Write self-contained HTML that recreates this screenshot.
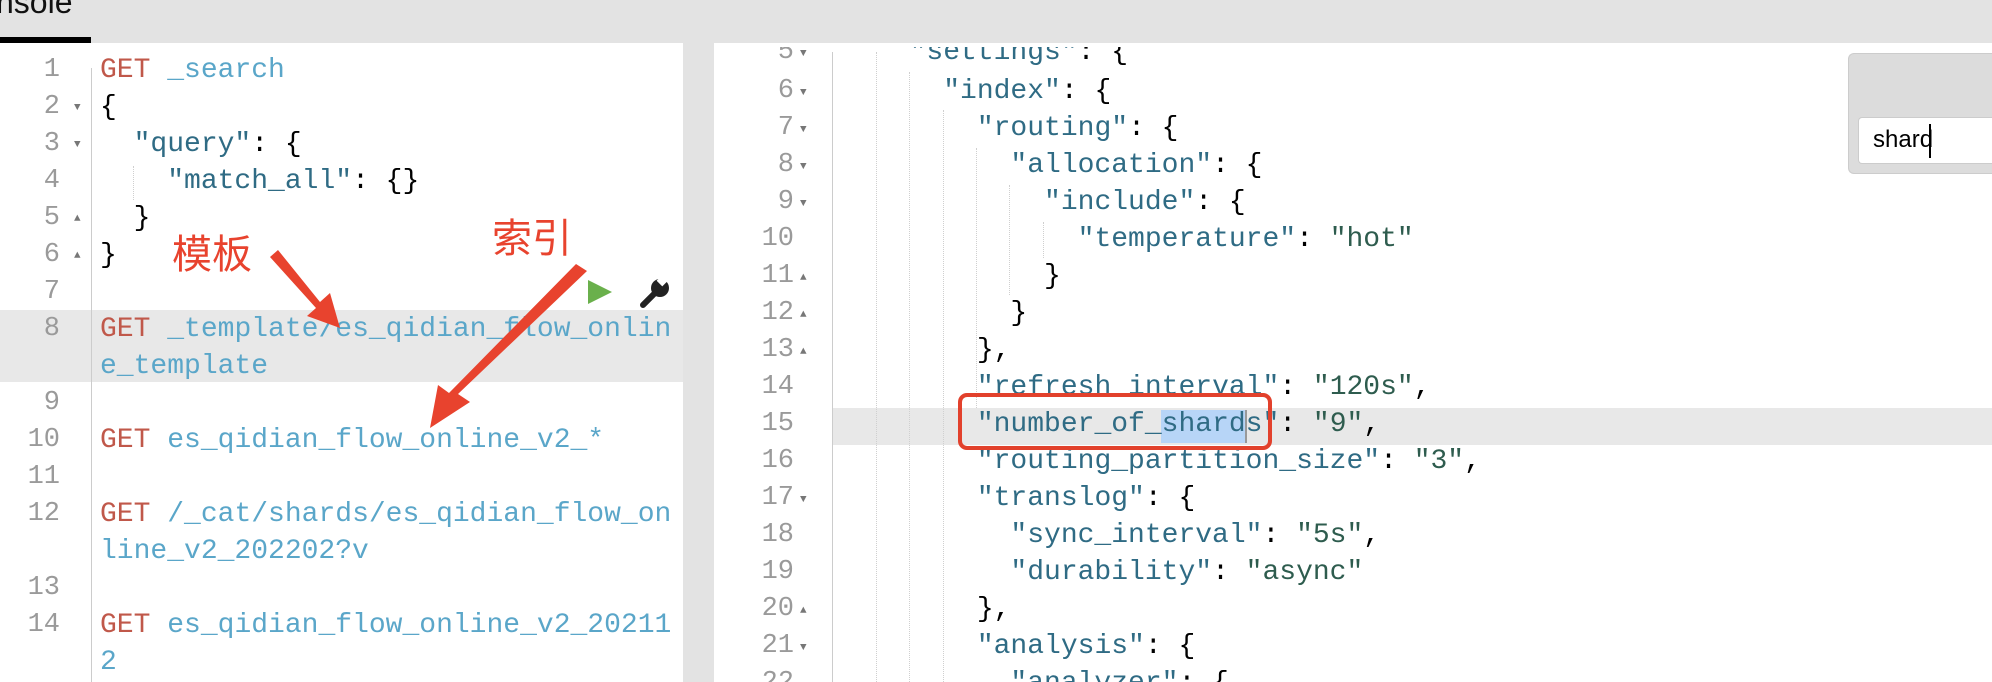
<!DOCTYPE html>
<html><head><meta charset="utf-8"><style>
html,body{margin:0;padding:0;width:1992px;height:682px;overflow:hidden}
body{background:#e3e3e3;position:relative;font-family:"Liberation Mono","DejaVu Sans Mono",monospace}
.p{position:absolute;background:#fff}
.l{position:absolute;height:37px;line-height:37px;font-size:28px;letter-spacing:0px;white-space:pre;color:#000}
.n{position:absolute;height:37px;line-height:37px;font-size:27px;color:#9a9a9a;text-align:right;width:60px}
.f{position:absolute;font-size:11px;color:#777}
.g{color:#c0584a}.u{color:#5aa6c9}.k{color:#2f6b84}.s{color:#2e5c4e}
.hl{position:absolute;background:#e8e8e8}
.guide{position:absolute;border-left:1px dotted #cfcfcf}
</style></head><body>
<div style="position:absolute;left:-4px;top:-16px;font-family:'Liberation Sans',sans-serif;font-size:32px;color:#111">nsole</div>
<div style="position:absolute;left:0;top:37px;width:91px;height:6px;background:#000"></div>

<div class="p" style="left:0;top:43px;width:683px;height:639px"></div>
<div class="hl" style="left:0;top:310px;width:683px;height:72px"></div>
<div style="position:absolute;left:91px;top:68px;width:1px;height:614px;background:#ccc"></div>
<div class="guide" style="left:133px;top:166px;height:34px"></div>

<div class="n" style="left:0;top:52px">1</div><div class="l" style="left:100px;top:52px"><span class="g">GET</span> <span class="u">_search</span></div>
<div class="n" style="left:0;top:89px">2</div><div class="f" style="left:74px;top:102px">▼</div><div class="l" style="left:100px;top:89px">{</div>
<div class="n" style="left:0;top:126px">3</div><div class="f" style="left:74px;top:139px">▼</div><div class="l" style="left:100px;top:126px">  <span class="k">"query"</span>: {</div>
<div class="n" style="left:0;top:163px">4</div><div class="l" style="left:100px;top:163px">    <span class="k">"match_all"</span>: {}</div>
<div class="n" style="left:0;top:200px">5</div><div class="f" style="left:74px;top:213px">▲</div><div class="l" style="left:100px;top:200px">  }</div>
<div class="n" style="left:0;top:237px">6</div><div class="f" style="left:74px;top:250px">▲</div><div class="l" style="left:100px;top:237px">}</div>
<div class="n" style="left:0;top:274px">7</div>
<div class="n" style="left:0;top:311px">8</div><div class="l" style="left:100px;top:311px"><span class="g">GET</span> <span class="u">_template/es_qidian_flow_onlin</span></div>
<div class="l" style="left:100px;top:348px"><span class="u">e_template</span></div>
<div class="n" style="left:0;top:385px">9</div>
<div class="n" style="left:0;top:422px">10</div><div class="l" style="left:100px;top:422px"><span class="g">GET</span> <span class="u">es_qidian_flow_online_v2_*</span></div>
<div class="n" style="left:0;top:459px">11</div>
<div class="n" style="left:0;top:496px">12</div><div class="l" style="left:100px;top:496px"><span class="g">GET</span> <span class="u">/_cat/shards/es_qidian_flow_on</span></div>
<div class="l" style="left:100px;top:533px"><span class="u">line_v2_202202?v</span></div>
<div class="n" style="left:0;top:570px">13</div>
<div class="n" style="left:0;top:607px">14</div><div class="l" style="left:100px;top:607px"><span class="g">GET</span> <span class="u">es_qidian_flow_online_v2_20211</span></div>
<div class="l" style="left:100px;top:644px"><span class="u">2</span></div>

<svg style="position:absolute;left:585px;top:276px" width="90" height="34" viewBox="0 0 90 34">
<polygon points="3,4 27,16 3,28" fill="#6ab04c"/>
<path d="M58 29 L71 16" stroke="#222" stroke-width="6" stroke-linecap="round"/>
<circle cx="75" cy="12" r="9" fill="#222"/>
<rect x="74" y="0" width="8" height="9" fill="#fff" transform="rotate(45 78 4)"/>
</svg>

<div class="p" style="left:714px;top:43px;width:1278px;height:639px"></div>
<div class="hl" style="left:833px;top:408px;width:1159px;height:37px"></div>
<div style="position:absolute;left:1161px;top:410px;width:84px;height:33px;background:#b7d5f7"></div>
<div style="position:absolute;left:1245px;top:410px;width:2px;height:33px;background:#999"></div>
<div style="position:absolute;left:832px;top:52px;width:1px;height:630px;background:#ccc"></div>
<div class="guide" style="left:876px;top:52px;height:630px"></div>
<div class="guide" style="left:909px;top:72px;height:610px"></div>
<div class="guide" style="left:943px;top:110px;height:572px"></div>
<div class="guide" style="left:976px;top:148px;height:260px"></div>
<div class="guide" style="left:1009px;top:185px;height:110px"></div>
<div class="guide" style="left:1043px;top:222px;height:36px"></div>

<div class="n" style="left:734px;top:34px">5</div><div class="f" style="left:800px;top:48px">▼</div><div class="l" style="left:876px;top:34px">  <span class="k">"settings"</span>: {</div>
<div style="position:absolute;left:714px;top:0;width:1278px;height:43px;background:#e3e3e3"></div>
<div style="position:absolute;left:714px;top:43px;width:1130px;height:4px;background:#fff"></div>

<div class="n" style="left:734px;top:73px">6</div><div class="f" style="left:800px;top:87px">▼</div><div class="l" style="left:876px;top:73px">    <span class="k">"index"</span>: {</div>
<div class="n" style="left:734px;top:110px">7</div><div class="f" style="left:800px;top:124px">▼</div><div class="l" style="left:876px;top:110px">      <span class="k">"routing"</span>: {</div>
<div class="n" style="left:734px;top:147px">8</div><div class="f" style="left:800px;top:161px">▼</div><div class="l" style="left:876px;top:147px">        <span class="k">"allocation"</span>: {</div>
<div class="n" style="left:734px;top:184px">9</div><div class="f" style="left:800px;top:198px">▼</div><div class="l" style="left:876px;top:184px">          <span class="k">"include"</span>: {</div>
<div class="n" style="left:734px;top:221px">10</div><div class="l" style="left:876px;top:221px">            <span class="k">"temperature"</span>: <span class="s">"hot"</span></div>
<div class="n" style="left:734px;top:258px">11</div><div class="f" style="left:800px;top:272px">▲</div><div class="l" style="left:876px;top:258px">          }</div>
<div class="n" style="left:734px;top:295px">12</div><div class="f" style="left:800px;top:309px">▲</div><div class="l" style="left:876px;top:295px">        }</div>
<div class="n" style="left:734px;top:332px">13</div><div class="f" style="left:800px;top:346px">▲</div><div class="l" style="left:876px;top:332px">      },</div>
<div class="n" style="left:734px;top:369px">14</div><div class="l" style="left:876px;top:369px">      <span class="k">"refresh_interval"</span>: <span class="s">"120s"</span>,</div>
<div class="n" style="left:734px;top:406px">15</div><div class="l" style="left:876px;top:406px">      <span class="k">"number_of_shards"</span>: <span class="s">"9"</span>,</div>
<div class="n" style="left:734px;top:443px">16</div><div class="l" style="left:876px;top:443px">      <span class="k">"routing_partition_size"</span>: <span class="s">"3"</span>,</div>
<div class="n" style="left:734px;top:480px">17</div><div class="f" style="left:800px;top:494px">▼</div><div class="l" style="left:876px;top:480px">      <span class="k">"translog"</span>: {</div>
<div class="n" style="left:734px;top:517px">18</div><div class="l" style="left:876px;top:517px">        <span class="k">"sync_interval"</span>: <span class="s">"5s"</span>,</div>
<div class="n" style="left:734px;top:554px">19</div><div class="l" style="left:876px;top:554px">        <span class="k">"durability"</span>: <span class="s">"async"</span></div>
<div class="n" style="left:734px;top:591px">20</div><div class="f" style="left:800px;top:605px">▲</div><div class="l" style="left:876px;top:591px">      },</div>
<div class="n" style="left:734px;top:628px">21</div><div class="f" style="left:800px;top:642px">▼</div><div class="l" style="left:876px;top:628px">      <span class="k">"analysis"</span>: {</div>
<div class="n" style="left:734px;top:665px">22</div><div class="l" style="left:876px;top:665px">        <span class="k">"analyzer"</span>: {</div>

<div style="position:absolute;left:958px;top:393px;width:306px;height:49px;border:4px solid #e2412c;border-radius:9px"></div>

<div style="position:absolute;left:1848px;top:53px;width:144px;height:119px;background:#dcdcdc;border:1px solid #ccc;border-right:none;border-radius:6px 0 0 6px"></div>
<div style="position:absolute;left:1858px;top:117px;width:134px;height:45px;background:#fff;border:1px solid #ccc;border-right:none;border-radius:4px 0 0 4px"></div>
<div style="position:absolute;left:1873px;top:124px;font-family:'Liberation Sans',sans-serif;font-size:24px;line-height:32px;color:#000">shard</div>
<div style="position:absolute;left:1929px;top:124px;width:2px;height:34px;background:#000"></div>

<div style="position:absolute;left:172px;top:226px;font-family:'Noto Sans CJK SC',sans-serif;font-size:40px;line-height:50px;color:#e8432e">模板</div>
<div style="position:absolute;left:492px;top:210px;font-family:'Noto Sans CJK SC',sans-serif;font-size:40px;line-height:50px;color:#e8432e">索引</div>
<svg style="position:absolute;left:0;top:0" width="1992" height="682">
<polygon points="270,257 278,250 320,302 330,293 340,328 307,316 316,308" fill="#e8432e"/>
<polygon points="576,264 587,271 458,394 470,402 430,428 438,385 449,393" fill="#e8432e"/>
</svg>
</body></html>
